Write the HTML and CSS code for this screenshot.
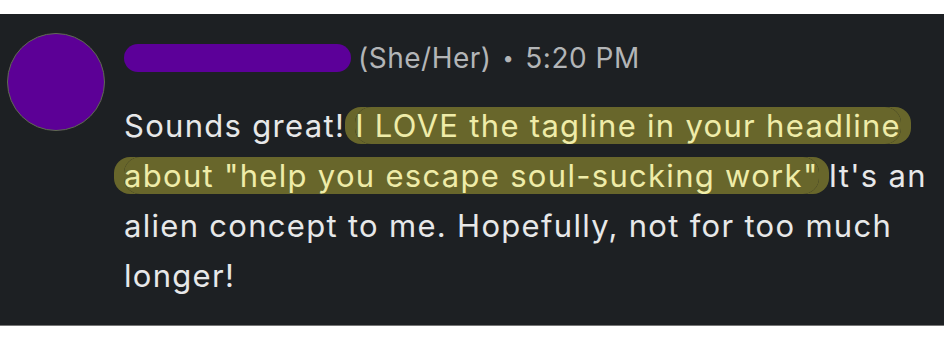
FILE: index.html
```html
<!DOCTYPE html>
<html lang="en">
<head>
<meta charset="UTF-8">
<meta name="viewport" content="width=device-width, initial-scale=1.0">
<title>Comment</title>
<link rel="stylesheet" href="styles.css">
</head>
<body>
<div class="comment">
    <div class="avatar"></div>
    <div class="comment-body">
        <div class="meta">
            <span class="name-hidden"></span>
            <span class="pronouns">(She/Her)</span>
            <span class="dot">•</span>
            <span class="time">5:20 PM</span>
        </div>
        <p class="message">Sounds great! <mark class="hl">I LOVE the tagline in your headline about "help you escape soul-sucking work"</mark> It's an alien concept to me. Hopefully, not for too much longer!</p>
    </div>
</div>
</body>
</html>
```

FILE: styles.css
```css
body {
    margin: 0;
    background: #ffffff;
    font-family: Inter, "Liberation Sans", Arial, sans-serif;
}
.comment {
    margin-top: 14px;
    height: 312px;
    background: #1d2023;
    border-bottom: 1px solid #767676;
    box-sizing: border-box;
    padding: 19px 0 0 7px;
    display: flex;
    gap: 19px;
}
.avatar {
    flex: none;
    width: 96px;
    height: 96px;
    border-radius: 50%;
    background: #5c0096;
    border: 1px solid #5f6c50;
}
.comment-body {
    padding-top: 11px;
    width: 812px;
}
.meta {
    display: flex;
    align-items: center;
    height: 28px;
    line-height: 28px;
    font-size: 28px;
    letter-spacing: 0.5px;
    color: #b3b5b7;
}
.name-hidden {
    width: 227px;
    height: 28px;
    border-radius: 14px;
    background: #5c0099;
    margin-right: 7px;
}
.dot {
    margin: 0 11px;
    font-size: 20px;
}
.message {
    margin: 29px 0 0;
    font-size: 31px;
    letter-spacing: 1.3px;
    line-height: 50px;
    color: #e7e8e9;
}
.hl {
    background: #68662b;
    color: #efeca8;
    border-radius: 16px;
    box-decoration-break: clone;
    -webkit-box-decoration-break: clone;
    box-shadow: 10px 0 0 #68662b, -10px 0 0 #68662b;
}
```
